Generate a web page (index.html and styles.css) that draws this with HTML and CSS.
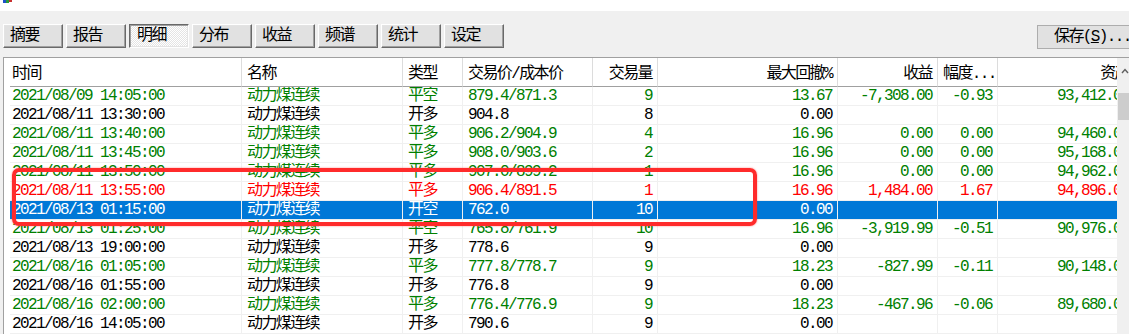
FILE: index.html
```html
<!DOCTYPE html>
<html>
<head>
<meta charset="UTF-8">
<title>交易明细</title>
<link rel="stylesheet" href="styles.css">
</head>
<body>

<div class="titlebar">
	<svg class="appIcon" width="10" height="5" viewBox="0 0 10 5">
		<rect x="0" y="0" width="3" height="3" fill="#1e50c8"/>
		<rect x="3" y="0" width="3" height="3" fill="#2a9a3a"/>
		<rect x="6" y="0" width="3" height="2" fill="#c83030"/>
	</svg>
</div>

<!-- 탭 버튼 -->
<div class="toolbar">
	<button class="tabBtn">摘要</button>
	<button class="tabBtn">报告</button>
	<button class="tabBtn pressed">明细</button>
	<button class="tabBtn">分布</button>
	<button class="tabBtn">收益</button>
	<button class="tabBtn">频谱</button>
	<button class="tabBtn">统计</button>
	<button class="tabBtn">设定</button>
	<button class="saveBtn">保存(<u>S</u>)...</button>
</div>

<!-- 明细 列表 -->
<div class="listview">
	<div class="viewport">
		<table class="grid">
			<colgroup>
				<col style="width:232px"><col style="width:161px"><col style="width:60px">
				<col style="width:130px"><col style="width:65px"><col style="width:180px">
				<col style="width:100px"><col style="width:60px"><col style="width:137px">
			</colgroup>
			<thead>
				<tr>
					<th class="first">时间</th>
					<th>名称</th>
					<th>类型</th>
					<th>交易价/成本价</th>
					<th class="num">交易量</th>
					<th class="num">最大回撤%</th>
					<th class="num">收益</th>
					<th class="num">幅度...</th>
					<th class="num">资产</th>
				</tr>
			</thead>
			<tbody>
				<tr class="g"><td class="first">2021/08/09 14:05:00</td><td>动力煤连续</td><td>平空</td><td>879.4/871.3</td><td class="num">9</td><td class="num">13.67</td><td class="num">-7,308.00</td><td class="num">-0.93</td><td class="num">93,412.00</td></tr>
				<tr><td class="first">2021/08/11 13:30:00</td><td>动力煤连续</td><td>开多</td><td>904.8</td><td class="num">8</td><td class="num">0.00</td><td></td><td></td><td></td></tr>
				<tr class="g"><td class="first">2021/08/11 13:40:00</td><td>动力煤连续</td><td>平多</td><td>906.2/904.9</td><td class="num">4</td><td class="num">16.96</td><td class="num">0.00</td><td class="num">0.00</td><td class="num">94,460.00</td></tr>
				<tr class="g"><td class="first">2021/08/11 13:45:00</td><td>动力煤连续</td><td>平多</td><td>908.0/903.6</td><td class="num">2</td><td class="num">16.96</td><td class="num">0.00</td><td class="num">0.00</td><td class="num">95,168.00</td></tr>
				<tr class="g"><td class="first">2021/08/11 13:50:00</td><td>动力煤连续</td><td>平多</td><td>907.0/899.2</td><td class="num">1</td><td class="num">16.96</td><td class="num">0.00</td><td class="num">0.00</td><td class="num">94,962.00</td></tr>
				<tr class="r"><td class="first">2021/08/11 13:55:00</td><td>动力煤连续</td><td>平多</td><td>906.4/891.5</td><td class="num">1</td><td class="num">16.96</td><td class="num">1,484.00</td><td class="num">1.67</td><td class="num">94,896.00</td></tr>
				<tr class="selected"><td class="first">2021/08/13 01:15:00</td><td>动力煤连续</td><td>开空</td><td>762.0</td><td class="num">10</td><td class="num">0.00</td><td></td><td></td><td></td></tr>
				<tr class="g"><td class="first">2021/08/13 01:25:00</td><td>动力煤连续</td><td>平空</td><td>765.8/761.9</td><td class="num">10</td><td class="num">16.96</td><td class="num">-3,919.99</td><td class="num">-0.51</td><td class="num">90,976.00</td></tr>
				<tr><td class="first">2021/08/13 19:00:00</td><td>动力煤连续</td><td>开多</td><td>778.6</td><td class="num">9</td><td class="num">0.00</td><td></td><td></td><td></td></tr>
				<tr class="g"><td class="first">2021/08/16 01:05:00</td><td>动力煤连续</td><td>平多</td><td>777.8/778.7</td><td class="num">9</td><td class="num">18.23</td><td class="num">-827.99</td><td class="num">-0.11</td><td class="num">90,148.00</td></tr>
				<tr><td class="first">2021/08/16 01:55:00</td><td>动力煤连续</td><td>开多</td><td>776.8</td><td class="num">9</td><td class="num">0.00</td><td></td><td></td><td></td></tr>
				<tr class="g"><td class="first">2021/08/16 02:00:00</td><td>动力煤连续</td><td>平多</td><td>776.4/776.9</td><td class="num">9</td><td class="num">18.23</td><td class="num">-467.96</td><td class="num">-0.06</td><td class="num">89,680.00</td></tr>
				<tr><td class="first">2021/08/16 14:05:00</td><td>动力煤连续</td><td>开多</td><td>790.6</td><td class="num">9</td><td class="num">0.00</td><td></td><td></td><td></td></tr>
			</tbody>
		</table>
	</div>

	<div class="vscroll">
		<svg class="upArrow" width="8" height="6" viewBox="0 0 8 6">
			<polyline points="1,5 4,1.5 7,5" fill="none" stroke="#606060" stroke-width="1.4"/>
		</svg>
		<div class="thumb"></div>
	</div>
</div>

<!-- 빨간 표시 상자 -->
<div class="mark"></div>

</body>
</html>
```

FILE: styles.css
```css
/* 기본 스타일 */
html, body {
	margin: 0;
	padding: 0;
	width: 100%;
	height: 100%;
	overflow: hidden;
}
body {
	position: relative;
	background: #f0f0f0;
	font-family: "Liberation Mono", "Noto Sans CJK SC", monospace;
	font-size: 16px;
	letter-spacing: -1.6px;
	color: #000;
}

.titlebar {
	height: 11px;
	background: #fff;
	overflow: hidden;
}
.appIcon {
	display: block;
	margin-left: 3px;
}

/* 탭 버튼 */
.toolbar {
	display: flex;
	gap: 3px;
	padding: 13px 0 0 3px;
	height: 24px;
	margin-bottom: 9px;
}
.tabBtn {
	box-sizing: border-box;
	width: 60px;
	height: 24px;
	margin: 0;
	padding: 0 0 0 6px;
	text-align: left;
	font: inherit;
	letter-spacing: inherit;
	line-height: 20px;
	color: #000;
	background: #e1e1e1;
	border: 1px solid;
	border-color: #fff #696969 #696969 #fff;
	box-shadow: inset -1px -1px 0 #a0a0a0, inset 1px 1px 0 #e3e3e3;
}
.tabBtn.pressed {
	border-color: #696969 #fff #fff #696969;
	box-shadow: inset 1px 1px 0 #a0a0a0, inset -1px -1px 0 #e3e3e3;
	background: repeating-conic-gradient(#fff 0 25%, #e4e4e4 0 50%) 0 0 / 2px 2px;
	padding-left: 7px;
}
.saveBtn {
	box-sizing: border-box;
	width: 100px;
	height: 24px;
	margin: 1px -8px 0 auto;
	padding: 0 0 0 16px;
	text-align: left;
	font: inherit;
	letter-spacing: inherit;
	line-height: 20px;
	background: #e1e1e1;
	border: 1px solid #adadad;
}

/* 목록 */
.listview {
	display: flex;
	margin-left: 3px;
	height: 277px;
	border-top: 1px solid #a0a0a0;
	border-left: 1px solid #a0a0a0;
	background: #fff;
}
.viewport {
	flex: 1;
	overflow: hidden;
	padding-left: 6px;
}
.grid {
	table-layout: fixed;
	width: 1125px;
	border-collapse: separate;
	border-spacing: 0;
}
.grid th, .grid td {
	padding: 0 5px 0 5px;
	white-space: nowrap;
	overflow: hidden;
	text-align: left;
}
.grid th {
	height: 25px;
	padding-top: 3px;
	line-height: 22px;
	font-weight: normal;
	border-bottom: 1px solid #a0a0a0;
	border-right: 1px solid #dcdcdc;
}
.grid td {
	height: 18px;
	line-height: 18px;
	border-bottom: 1px solid #f0f0f0;
	border-right: 1px solid #f0f0f0;
}
.grid .first {
	padding-left: 2px;
}
.grid .num {
	text-align: right;
}
.grid tr.g td {
	color: #008000;
}
.grid tr.r td {
	color: #ff0000;
}
.grid tr.selected td {
	color: #fff;
	background: #0078d7;
}

/* 스크롤바 */
.vscroll {
	position: relative;
	width: 12px;
	background: #f0f0f0;
}
.upArrow {
	display: block;
	margin: 10px 0 0 4px;
}
.thumb {
	margin: 19px 0 0 1px;
	height: 27px;
	background: #cdcdcd;
}

.mark {
	position: absolute;
	left: 12px;
	top: 168px;
	width: 745px;
	height: 58px;
	box-sizing: border-box;
	border: 4px solid #ff2b2b;
	border-radius: 7px;
	box-shadow: 0 0 2px rgba(255, 40, 40, 0.6);
}
```
